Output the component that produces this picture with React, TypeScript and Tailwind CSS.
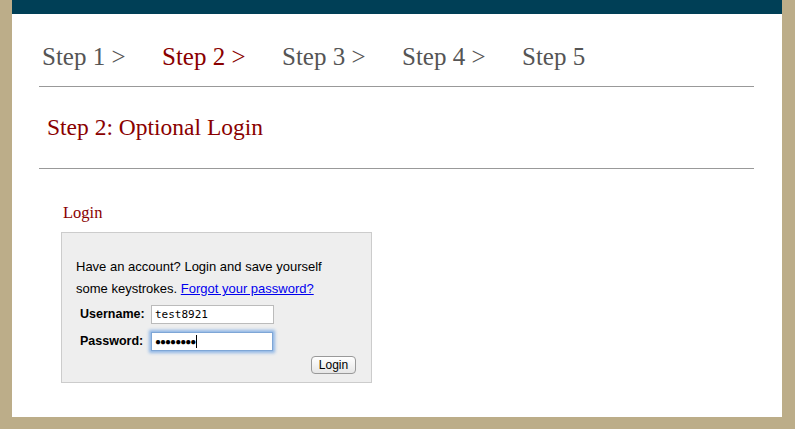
import React from "react";

export default function App() {
  const steps = ["Step 1 >", "Step 2 >", "Step 3 >", "Step 4 >", "Step 5"];
  return (
    <div className="w-[795px] h-[429px] bg-[#bcad89] overflow-hidden">
      <div className="ml-[12px] w-[770px] h-[417px] bg-white">
        <div className="h-[14px] bg-[#003f56]" />
        <div className="ml-[30px] mt-[28px] flex h-[30px] items-center" style={{ fontFamily: '"Liberation Serif", serif' }}>
          {steps.map((s, i) => (
            <div key={s} className={`w-[120px] text-[25px] leading-[30px] ${i === 1 ? "text-[#8a0000]" : "text-[#555555]"}`}>
              {s}
            </div>
          ))}
        </div>
        <div className="ml-[27px] mt-[14px] w-[715px] h-[1px] bg-[#999999]" />
        <div className="ml-[35px] mt-[27px] h-[26px] text-[23.5px] leading-[26px] text-[#8a0000]" style={{ fontFamily: '"Liberation Serif", serif' }}>
          Step 2: Optional Login
        </div>
        <div className="ml-[27px] mt-[28px] w-[715px] h-[1px] bg-[#999999]" />
        <div className="ml-[51px] mt-[34px] h-[20px] text-[16.5px] leading-[20px] text-[#8a0000]" style={{ fontFamily: '"Liberation Serif", serif' }}>
          Login
        </div>
        <div
          className="ml-[49px] mt-[9px] w-[311px] h-[151px] bg-[#eeeeee] border border-[#cccccc] pl-[14px] pt-[23px] text-[13px] text-black"
          style={{ fontFamily: '"Liberation Sans", Arial, sans-serif' }}
        >
          <div className="leading-[22px]">Have an account? Login and save yourself</div>
          <div className="leading-[22px]">
            some keystrokes. <span className="text-[#0000ee] underline">Forgot your password?</span>
          </div>
          <div className="mt-[5px] flex items-center h-[19px] text-[12.5px]">
            <div className="w-[75px] pl-[4px] font-bold">Username:</div>
            <div className="w-[123px] h-[19px] bg-white border border-[#bbbbbb] pl-[3px] leading-[17px]" style={{ fontFamily: '"DejaVu Sans Mono", monospace', fontSize: "11px" }}>
              test8921
            </div>
          </div>
          <div className="mt-[8px] flex items-center h-[19px] text-[12.5px]">
            <div className="w-[75px] pl-[4px] font-bold">Password:</div>
            <div className="w-[122px] h-[19px] bg-white border border-[#7ea6d6] shadow-[0_0_3px_2px_#8fb6e6] pl-[3px] flex items-center">
              <span className="text-[10px] leading-[17px] tracking-[-1px]">●●●●●●●●</span>
              <span className="ml-[1px] w-[1px] h-[13px] bg-black" />
            </div>
          </div>
          <div className="mt-[5px] flex justify-end pr-[15px]">
            <div className="h-[18px] w-[45px] rounded-[4px] border border-[#999999] bg-gradient-to-b from-white to-[#e6e6e6] text-center text-[12px] leading-[16px]">
              Login
            </div>
          </div>
        </div>
      </div>
    </div>
  );
}
